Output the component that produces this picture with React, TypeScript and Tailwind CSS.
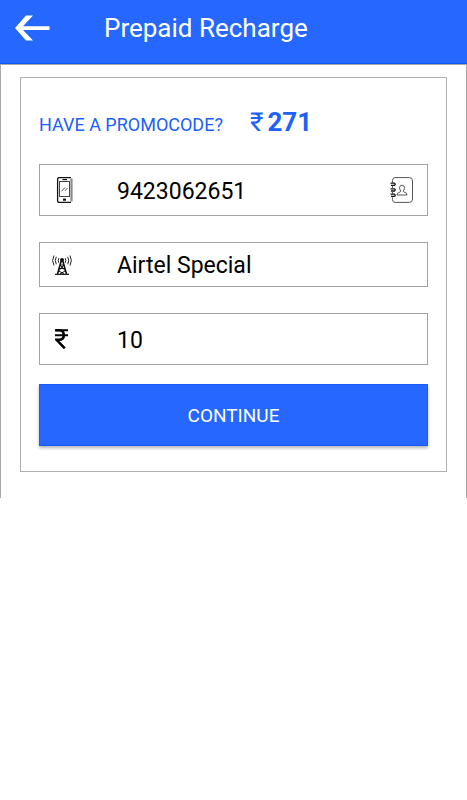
import { useState } from 'react';
import type { ReactNode } from 'react';

function BackIcon() {
  return (
    <svg width="36" height="26" viewBox="0 0 36 26" aria-hidden="true">
      <path d="M0 13 L11 0.5 H18 L8 11.2 H34.5 V15 H8 L18 25.5 H11 Z" fill="#fff" />
    </svg>
  );
}

function PhoneIcon() {
  return (
    <svg width="22" height="26" viewBox="-6 0 22 26" fill="none" aria-hidden="true">
      <path d="M14.5 1.5 V24.5" stroke="#8a8a8a" strokeWidth="2.2" />
      <path d="M14 0.6 H2 Q0.6 0.6 0.6 2 V24 Q0.6 25.4 2 25.4 H14" stroke="#111" strokeWidth="1.3" />
      <rect x="2.5" y="4.5" width="10" height="15" stroke="#444" />
      <path d="M5.5 2.6 H10" stroke="#111" strokeWidth="1.2" />
      <path d="M4.5 14.3 L8 10.5 M8 13.8 L10.5 11" stroke="#444" strokeWidth="0.9" />
      <rect x="6" y="21.4" width="3" height="2.4" rx="0.6" fill="#111" />
    </svg>
  );
}

function ContactsIcon() {
  return (
    <svg width="24" height="26" viewBox="0 0 24 26" fill="none" aria-hidden="true">
      <path
        d="M2.5 5.5 V3.5 Q2.5 0.6 5 0.6 H19.5 Q22.5 0.6 22.5 4 V22 Q22.5 25.4 19.5 25.4 H5 Q2.5 25.4 2.5 22.5 V20.5"
        stroke="#555"
      />
      <path
        d="M0.5 6.2 H4.5 Q6 7.2 4.5 8.4 H1 M0.5 11.8 H4.5 Q6 12.8 4.5 14 H1 M0.5 17.2 H4.5 Q6 18.2 4.5 19.4 H1"
        stroke="#111"
        strokeWidth="1.3"
      />
      <path d="M2.5 8.5 V11.5 M2.5 14 V17" stroke="#555" />
      <path
        d="M10.8 14.2 Q9.3 12 9.6 10.2 Q10 8.2 12 8.2 Q14 8.2 14.4 10.2 Q14.7 12 13.2 14.2 Q13.4 15 15 15.4 Q17 15.8 17 18 H7 Q7 15.8 9 15.4 Q10.6 15 10.8 14.2 Z"
        stroke="#444"
        strokeWidth="0.9"
      />
    </svg>
  );
}

function TowerIcon() {
  return (
    <svg width="20" height="20" viewBox="0 0 20 20" fill="none" stroke="#111" aria-hidden="true">
      <circle cx="10" cy="5" r="2" fill="#111" stroke="none" />
      <path d="M9.2 6 L5.5 19 M10.8 6 L14.5 19" strokeWidth="1.6" />
      <path d="M8 10 H12 M7.3 13.5 H12.7 M8 10 L13.4 15.8 M12 10 L6.6 15.8 M6.6 15.8 L12 19 M13.4 15.8 L8 19" />
      <path d="M3 19.3 H17" strokeWidth="1.2" />
      <path
        d="M6.8 3.2 Q5.6 5.5 6.8 7.8 M13.2 3.2 Q14.4 5.5 13.2 7.8 M4.3 1.8 Q2.2 5.5 4.3 9.2 M15.7 1.8 Q17.8 5.5 15.7 9.2 M2 0.5 Q-0.8 5.5 2 10.5 M18 0.5 Q20.8 5.5 18 10.5"
        stroke="#222"
      />
    </svg>
  );
}

function RupeeIcon() {
  return (
    <svg width="14" height="20" viewBox="0 0 14 20" fill="none" stroke="#000" aria-hidden="true">
      <path d="M0 1.3 H13 M0 6.3 H13" strokeWidth="2" />
      <path d="M0.5 1.3 H4 Q8.8 1.3 8.8 6 Q8.8 10.8 4 10.8 H1.6 L9.8 19.3" strokeWidth="2.6" />
    </svg>
  );
}

type FieldProps = {
  id: string;
  label: string;
  icon: ReactNode;
  value: string;
  onChange: (value: string) => void;
  className: string;
  children?: ReactNode;
};

function Field({ id, label, icon, value, onChange, className, children }: FieldProps) {
  return (
    <div className={`flex items-center border border-[#a3a3a3] pr-[13px] ${className}`}>
      <label htmlFor={id} aria-label={label} className="flex w-11 shrink-0 justify-center">
        {icon}
      </label>
      <input
        id={id}
        value={value}
        onChange={(e) => onChange(e.target.value)}
        className="ml-[33px] h-8 min-w-0 flex-1 pt-1 text-[23px] text-black outline-none"
      />
      {children}
    </div>
  );
}

export default function App() {
  const [mobile, setMobile] = useState('9423062651');
  const [operator, setOperator] = useState('Airtel Special');
  const [amount, setAmount] = useState('10');

  return (
    <div className="min-h-screen bg-white font-[Roboto,sans-serif]">
      <header className="flex h-16 items-center border-b border-[#0c56f5] bg-[#2668ff] pb-2 pl-[15px]">
        <button type="button" aria-label="Back" className="mr-[53px]">
          <BackIcon />
        </button>
        <h1 className="text-[26px] leading-8 text-white">Prepaid Recharge</h1>
      </header>

      <main className="border border-b-0 border-[#a8a8a8] px-[19px] pt-3 pb-[26px]">
        <form
          onSubmit={(e) => e.preventDefault()}
          className="border border-[#b0b0b0] px-[18px] pt-7 pb-[25px]"
        >
          <div className="mb-[26px] flex h-8 items-center">
            <a href="#promocode" className="mr-[27px] pt-[6px] text-lg text-[#2060fa]">
              HAVE A PROMOCODE?
            </a>
            <p className="flex gap-1 text-[26px] leading-8 text-[#2060fa]">
              <span>₹</span>
              <span className="font-bold">271</span>
            </p>
          </div>

          <Field
            id="mobile"
            label="Mobile number"
            icon={<PhoneIcon />}
            value={mobile}
            onChange={setMobile}
            className="h-[52px]"
          >
            <button type="button" aria-label="Contacts">
              <ContactsIcon />
            </button>
          </Field>
          <Field
            id="operator"
            label="Operator"
            icon={<TowerIcon />}
            value={operator}
            onChange={setOperator}
            className="mt-[26px] h-[45px]"
          />
          <Field
            id="amount"
            label="Amount"
            icon={<RupeeIcon />}
            value={amount}
            onChange={setAmount}
            className="mt-[26px] h-[52px]"
          />

          <button
            type="submit"
            className="mt-[19px] h-[62px] w-full border border-[#155cfb] bg-[#2668ff] pt-[2px] text-[19px] text-white shadow-[0_2px_3px_rgba(0,0,0,0.3)]"
          >
            CONTINUE
          </button>
        </form>
      </main>
    </div>
  );
}
